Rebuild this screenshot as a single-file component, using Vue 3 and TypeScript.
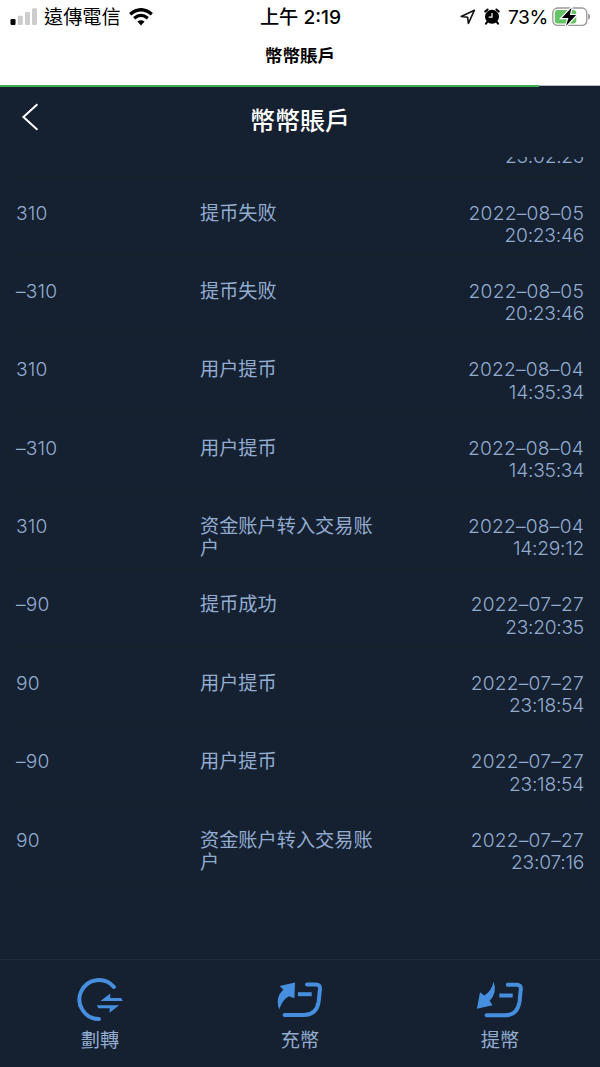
<script setup lang="ts">
interface LedgerRow {
  amount: string
  kind: string
  date: string
  time: string
}

const partialTime = '23:02:25'

const rows: LedgerRow[] = [
  { amount: '310', kind: '提币失败', date: '2022–08–05', time: '20:23:46' },
  { amount: '–310', kind: '提币失败', date: '2022–08–05', time: '20:23:46' },
  { amount: '310', kind: '用户提币', date: '2022–08–04', time: '14:35:34' },
  { amount: '–310', kind: '用户提币', date: '2022–08–04', time: '14:35:34' },
  { amount: '310', kind: '资金账户转入交易账户', date: '2022–08–04', time: '14:29:12' },
  { amount: '–90', kind: '提币成功', date: '2022–07–27', time: '23:20:35' },
  { amount: '90', kind: '用户提币', date: '2022–07–27', time: '23:18:54' },
  { amount: '–90', kind: '用户提币', date: '2022–07–27', time: '23:18:54' },
  { amount: '90', kind: '资金账户转入交易账户', date: '2022–07–27', time: '23:07:16' },
]
</script>

<template>
  <div class="screen">
    <header class="browser">
      <div class="status">
        <div class="side">
          <svg class="signal" width="28" height="18" viewBox="0 0 28 18">
            <rect x="0.5" y="11" width="5" height="6" rx="1.2" fill="#000" />
            <rect x="7.8" y="7.8" width="5" height="9.2" rx="1.2" fill="#ccc" />
            <rect x="15" y="4" width="5" height="13" rx="1.2" fill="#ccc" />
            <rect x="22" y="0.3" width="5" height="16.7" rx="1.2" fill="#ccc" />
          </svg>
          <span class="carrier">遠傳電信</span>
          <svg class="wifi" width="24" height="18" viewBox="0 0 24 18">
            <g fill="none" stroke="#000" stroke-width="3.3">
              <path d="M1.2 6.2Q12 -2.8 22.8 6.2" />
              <path d="M5.2 10.3Q12 4.4 18.8 10.3" />
            </g>
            <path d="M8.4 13.6Q12 10.8 15.6 13.6L12 17.4Z" fill="#000" />
          </svg>
        </div>
        <div class="clock">上午 2:19</div>
        <div class="side right">
          <svg class="locate" width="16" height="16" viewBox="0 0 16 16">
            <path d="M14.4 1.2L1.2 7.5L7.6 8.2L8.4 14.5Z" fill="none" stroke="#111" stroke-width="1.6" stroke-linejoin="round" />
          </svg>
          <svg class="alarm" width="16" height="17" viewBox="0 0 16 17">
            <path d="M1.3 3.6L3.6 1.5M12.4 1.5L14.7 3.6M3.5 13.5L2 15.6M12.5 13.5L14 15.6" stroke="#000" stroke-width="2" stroke-linecap="round" />
            <circle cx="8" cy="8.8" r="7" fill="#000" />
            <path d="M8 5V9.1H4.7" fill="none" stroke="#fff" stroke-width="1.2" />
          </svg>
          <span class="percent">73%</span>
          <svg class="battery" width="39" height="20" viewBox="0 0 39 20">
            <rect x="0.8" y="1" width="34" height="17.4" rx="4.8" fill="#fff" stroke="#999" stroke-width="1.3" />
            <path d="M36.7 7.2Q38.6 9.7 36.7 12.2Z" fill="#999" stroke="#999" />
            <rect x="2.8" y="3" width="21.5" height="13.4" rx="3" fill="#65c466" />
            <path d="M19.5 0.8L9.8 11H16.4L14 19L24.1 8.1H17.8Z" fill="#000" stroke="#fff" stroke-width="2.4" paint-order="stroke" />
          </svg>
        </div>
      </div>
      <div class="page-title">幣幣賬戶</div>
      <div class="progress"><div class="progress-fill"></div></div>
    </header>

    <div class="nav">
      <svg class="back" width="18" height="28" viewBox="0 0 18 28">
        <path d="M16.4 1.2L2.4 14L16.4 26.8" fill="none" stroke="#fff" stroke-width="2" />
      </svg>
      <h1>幣幣賬戶</h1>
    </div>

    <main class="list">
      <div class="rows">
        <div class="partial">{{ partialTime }}</div>
        <div v-for="(row, i) in rows" :key="i" class="row">
          <div class="amount">{{ row.amount }}</div>
          <div class="kind">{{ row.kind }}</div>
          <div class="when">
            <div class="date">{{ row.date }}</div>
            <div class="time">{{ row.time }}</div>
          </div>
        </div>
      </div>
    </main>

    <footer class="tabs">
      <div class="tab">
        <svg width="48" height="46" viewBox="0 0 48 46">
          <path d="M37.9 10A19.5 19.5 0 1 0 23 42" fill="none" stroke="#468fde" stroke-width="4" stroke-linecap="round" />
          <path d="M24.5 24L34.2 16.5V21H45.3L46.7 24Z M43.2 28.3L33.6 35.8V31.3H22.2L21 28.3Z" fill="#468fde" />
        </svg>
        <span>劃轉</span>
      </div>
      <div class="tab">
        <svg width="48" height="46" viewBox="0 0 48 46">
          <path d="M31 7.4H39.8Q44.5 7.4 44 12L42.6 25Q40.4 38 28 38H8.6" fill="none" stroke="#468fde" stroke-width="4" stroke-linecap="round" />
          <path d="M22 17.2H35.7" stroke="#468fde" stroke-width="4" />
          <path d="M19 5.6L3.6 9L7.4 12.8Q-1.2 20 3.2 32.6Q6.2 23 12.8 19.2L18.4 21.2Z" fill="#468fde" />
        </svg>
        <span>充幣</span>
      </div>
      <div class="tab">
        <svg width="48" height="46" viewBox="0 0 48 46">
          <path d="M31.8 7.7H40.6Q45.3 7.7 44.8 12.3L43.5 25Q41.2 38.3 29 38.3H10.6" fill="none" stroke="#468fde" stroke-width="4" stroke-linecap="round" />
          <path d="M23.3 18.5H36.7" stroke="#468fde" stroke-width="4" />
          <path d="M17.7 4.6Q21.5 16.5 13.6 23.8L16.6 28.2L0.9 31.7L4 15.2L8.2 18.5Q15.4 14.6 17.7 4.6Z" fill="#468fde" />
        </svg>
        <span>提幣</span>
      </div>
    </footer>
  </div>
</template>

<style>
body {
  margin: 0;
  background: #152030;
}
</style>

<style scoped>
.screen {
  display: flex;
  flex-direction: column;
  width: 600px;
  height: 1067px;
  overflow: hidden;
  background: #152030;
  font-family: Inter, "Noto Sans CJK TC", sans-serif;
}

.browser {
  display: flex;
  flex-direction: column;
  height: 87px;
  flex: none;
  background: #fff;
  color: #000;
}

.status {
  display: grid;
  grid-template-columns: 1fr auto 1fr;
  height: 33px;
  align-items: center;
  padding: 0 9px 0 10px;
}

.side {
  display: flex;
  align-items: center;
}

.right {
  justify-content: flex-end;
}

.carrier {
  margin: 0 8px 0 6px;
  font-size: 19.2px;
  line-height: 32px;
}

.clock {
  font-size: 19.2px;
  font-weight: 500;
  line-height: 32px;
}

.alarm {
  margin: 0 8px;
}

.percent {
  margin-right: 4px;
  font-size: 19.2px;
  letter-spacing: -0.4px;
  line-height: 32px;
}

.page-title {
  height: 52px;
  line-height: 46px;
  text-align: center;
  font-size: 17.6px;
  font-weight: 600;
}

.progress {
  height: 2px;
  background: linear-gradient(#b9bdc2 50%, #152030 50%);
}

.progress-fill {
  width: 539px;
  height: 2px;
  background: #3fae50;
}

.nav {
  display: grid;
  grid-template-columns: 60px 1fr 60px;
  height: 70px;
  flex: none;
}

.back {
  margin: 16px 0 0 21px;
}

h1 {
  margin: 0;
  color: #fff;
  text-align: center;
  font-size: 25px;
  font-weight: 500;
  line-height: 69px;
}

.list {
  flex: 1;
  overflow: hidden;
  padding: 0 16px;
}

.rows {
  margin-top: -11.9px;
  color: #92acd0;
  font-family: Inter, "Noto Sans CJK SC", sans-serif;
  font-size: 19.2px;
  font-weight: 300;
  line-height: 22.4px;
}

.partial {
  box-sizing: border-box;
  height: 32.4px;
  border-bottom: 1px solid #141f27;
  text-align: right;
  letter-spacing: -0.25px;
}

.row {
  display: grid;
  grid-template-columns: 184px 184px 1fr;
  box-sizing: border-box;
  height: 78.4px;
  padding-top: 24px;
  border-bottom: 1px solid #141f27;
}

.amount {
  letter-spacing: 0.15px;
}

.kind {
  font-weight: 400;
}

.when {
  text-align: right;
}

.date {
  letter-spacing: 0.22px;
}

.time {
  letter-spacing: -0.25px;
}

.tabs {
  display: grid;
  grid-template-columns: repeat(3, 1fr);
  box-sizing: border-box;
  height: 108px;
  flex: none;
  border-top: 1px solid #1c2b3b;
}

.tab {
  display: flex;
  flex-direction: column;
  align-items: center;
  padding-top: 17px;
}

.tab span {
  margin-top: 3px;
  color: #92acd0;
  font-size: 19.2px;
  line-height: 28px;
}
</style>
